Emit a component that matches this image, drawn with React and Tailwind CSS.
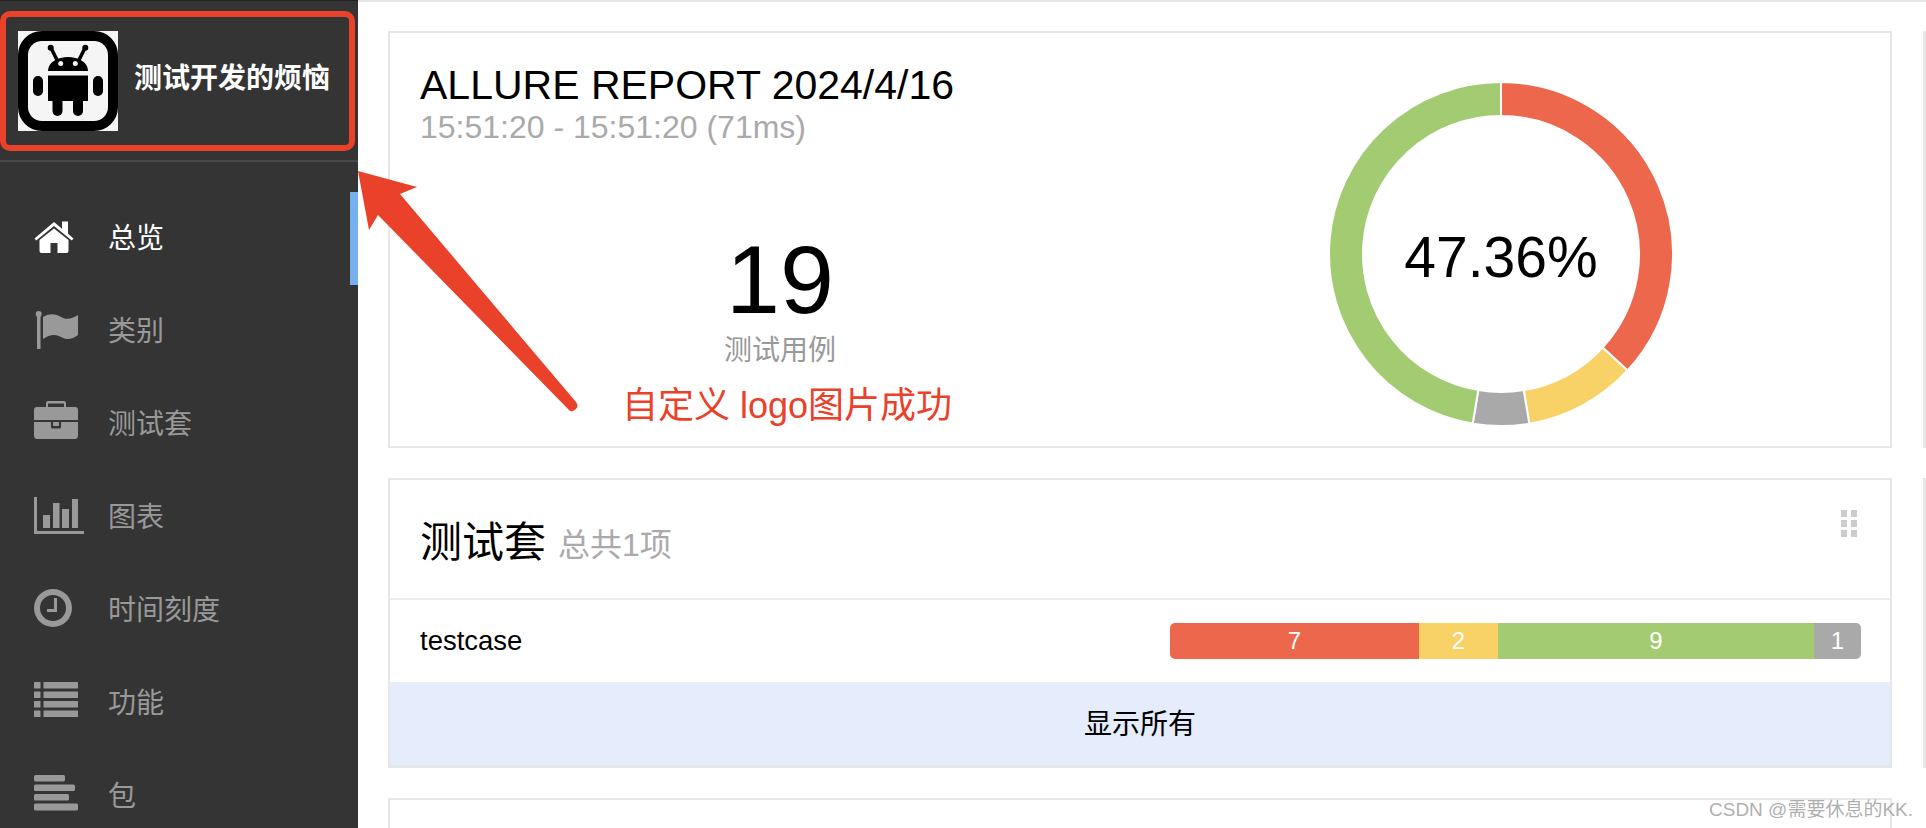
import React from 'react';

const cjk = 'font-["Liberation_Sans","Noto_Sans_CJK_SC",sans-serif]';

const HomeIcon = () => (
  <svg width="40" height="32" viewBox="0 0 40 32" className="fill-current">
    <path d="M20 1 L28 7.8 V0.5 H34 V12.7 L39.5 17.5 L37.8 19.5 L20 5 L2.2 19.5 L0.5 17.5 Z" />
    <path d="M20 7.5 L34.5 19 V30 Q34.5 32 32.5 32 H23.5 V22 H16.5 V32 H7.5 Q5.5 32 5.5 30 V19 Z" />
  </svg>
);

const FlagIcon = () => (
  <svg width="44" height="38" viewBox="0 0 44 38" className="fill-current">
    <circle cx="4.7" cy="3" r="3" />
    <rect x="3" y="3" width="3.5" height="35" />
    <path d="M9 6 C16 2 22 3 27 6 C32 9 38 8 44 4 V24 C38 29 32 29 27 26 C22 23 16 23 9 28 Z" />
  </svg>
);

const BriefcaseIcon = () => (
  <svg width="44" height="38" viewBox="0 0 44 38" className="fill-current">
    <path d="M14 0 H30 Q32 0 32 2 V6 H41 Q44 6 44 9 V19 H0 V9 Q0 6 3 6 H12 V2 Q12 0 14 0 Z M14 2.5 V6 H30 V2.5 Z" fillRule="evenodd" />
    <path d="M0 21 H17 V26 Q17 27.5 18.5 27.5 H25.5 Q27 27.5 27 26 V21 H44 V34 Q44 38 41 38 H3 Q0 38 0 34 Z" />
    <rect x="19" y="21" width="6" height="4" />
  </svg>
);

const ChartIcon = () => (
  <svg width="50" height="37" viewBox="0 0 50 37" className="fill-current">
    <path d="M0 0 H3 V34 H50 V37 H0 Z" />
    <rect x="9" y="18" width="7" height="13" />
    <rect x="19" y="6" width="6.5" height="25" />
    <rect x="28" y="12" width="7" height="19" />
    <rect x="38" y="2" width="6" height="29" />
  </svg>
);

const ClockIcon = () => (
  <svg width="38" height="38" viewBox="0 0 38 38" className="fill-current">
    <path d="M19 0 A19 19 0 1 0 19 38 A19 19 0 1 0 19 0 Z M19 6 A13 13 0 1 1 19 32 A13 13 0 1 1 19 6 Z" fillRule="evenodd" />
    <path d="M20 9 H23 V23 H13 V20 H20 Z" />
  </svg>
);

const ListIcon = () => (
  <svg width="44" height="35" viewBox="0 0 44 35" className="fill-current">
    {[0, 9.5, 19, 28.5].map((y) => (
      <React.Fragment key={y}>
        <rect x="0" y={y} width="6.5" height="6.5" rx="0.5" />
        <rect x="9.5" y={y} width="34.5" height="6.5" rx="0.5" />
      </React.Fragment>
    ))}
  </svg>
);

const AlignIcon = () => (
  <svg width="44" height="36" viewBox="0 0 44 36" className="fill-current">
    <rect x="0" y="0" width="31" height="6.5" rx="1.5" />
    <rect x="0" y="9.5" width="41" height="6.5" rx="1.5" />
    <rect x="0" y="19" width="35" height="6.5" rx="1.5" />
    <rect x="0" y="28.5" width="44" height="7" rx="1.5" />
  </svg>
);

const AndroidLogo = () => (
  <svg width="100" height="100" viewBox="0 0 100 100" className="shrink-0">
    <rect width="100" height="100" fill="#f5f5f5" />
    <rect x="0" y="0" width="100" height="100" rx="24" fill="#000" />
    <rect x="10" y="10" width="80" height="80" rx="14" fill="#f5f5f5" />
    <path d="M33 17 L39 29" stroke="#000" strokeWidth="3.5" />
    <path d="M67 17 L61 29" stroke="#000" strokeWidth="3.5" />
    <circle cx="32.7" cy="16.7" r="3" />
    <circle cx="67.3" cy="16.7" r="3" />
    <path d="M30 40 C30 31 40 26 50 26 C60 26 70 31 70 40 Z" />
    <circle cx="42.7" cy="32.5" r="2.5" fill="#f5f5f5" />
    <circle cx="57.3" cy="32.5" r="2.5" fill="#f5f5f5" />
    <rect x="30" y="44.5" width="40" height="25.5" />
    <rect x="34.5" y="60" width="10" height="25" rx="5" />
    <rect x="55" y="60" width="10" height="25" rx="5" />
    <rect x="15" y="45" width="10" height="20" rx="5" />
    <rect x="75" y="45" width="10" height="20" rx="5" />
  </svg>
);

const navItems = [
  { label: '总览', icon: HomeIcon, active: true, shift: '-translate-y-[2px]' },
  { label: '类别', icon: FlagIcon, shift: '-translate-y-[2px]' },
  { label: '测试套', icon: BriefcaseIcon, shift: '-translate-y-[5px]' },
  { label: '图表', icon: ChartIcon, shift: '-translate-y-[2px]' },
  { label: '时间刻度', icon: ClockIcon, shift: '-translate-y-[3px]' },
  { label: '功能', icon: ListIcon, shift: '-translate-y-[4px]' },
  { label: '包', icon: AlignIcon, shift: '-translate-y-[4px]' },
];

// donut segments, clockwise from the top
const polar = (r, deg) => {
  const a = ((deg - 90) * Math.PI) / 180;
  return [172 + r * Math.cos(a), 172 + r * Math.sin(a)];
};

const arcPath = (from, to) => {
  const large = to - from > 180 ? 1 : 0;
  const [x1, y1] = polar(172, from);
  const [x2, y2] = polar(172, to);
  const [x3, y3] = polar(138, to);
  const [x4, y4] = polar(138, from);
  return `M${x1} ${y1} A172 172 0 ${large} 1 ${x2} ${y2} L${x3} ${y3} A138 138 0 ${large} 0 ${x4} ${y4} Z`;
};

const segments = [
  { value: 7, color: '#ed674c' },
  { value: 2, color: '#f8d167' },
  { value: 1, color: '#a9a9a9' },
  { value: 9, color: '#a3cb72' },
];

const Donut = () => {
  let start = 0;
  return (
    <div className="relative w-[344px] h-[344px]">
      <svg width="344" height="344" viewBox="0 0 344 344">
        {segments.map((s) => {
          const from = start;
          const to = start + (s.value / 19) * 360;
          start = to;
          return <path key={s.color} d={arcPath(from, to)} fill={s.color} stroke="#fff" strokeWidth="2" />;
        })}
      </svg>
      <div className="absolute inset-0 flex items-center justify-center pt-[7px] text-[57px] text-black">47.36%</div>
    </div>
  );
};

const bar = [
  { value: 7, w: 'w-[249px]', color: 'bg-[#ed674c]' },
  { value: 2, w: 'w-[79px]', color: 'bg-[#f8d167]' },
  { value: 9, w: 'w-[316px]', color: 'bg-[#a3cb72]' },
  { value: 1, w: 'w-[47px]', color: 'bg-[#a9a9a9]' },
];

const App = () => {
  return (
    <div className={`relative flex h-[828px] w-[1926px] overflow-hidden bg-white ${cjk}`}>
      {/* Sidebar */}
      <aside className="w-[358px] shrink-0 bg-[#343434] border-t border-[#222]">
        <div className="h-[161px] border-b-2 border-[#4a4a4a] pt-[10px]">
          <div className="flex h-[140px] w-[355px] items-center rounded-[10px] border-[6px] border-[#e9412a] pl-[12px]">
            <AndroidLogo />
            <span className="ml-4 text-[28px] font-bold leading-none text-white -translate-y-[2px] whitespace-nowrap">测试开发的烦恼</span>
          </div>
        </div>
        <nav className="pt-[30px]">
          {navItems.map(({ label, icon: Icon, active, shift }) => (
            <div key={label} className={`relative flex h-[93px] items-center pl-[34px] ${active ? 'text-white' : 'text-[#999]'}`}>
              <div className={`flex w-[74px] items-center ${shift}`}>
                <Icon />
              </div>
              <span className="text-[28px] leading-none">{label}</span>
              {active && <div className="absolute right-0 top-0 h-full w-2 bg-[#76b0ee]" />}
            </div>
          ))}
        </nav>
      </aside>

      {/* Main */}
      <main className="flex flex-1 gap-[31px] border-t-2 border-[#e5e5e5] pt-[29px] pl-[30px]">
        <div className="w-[1504px] shrink-0">
          <section className="flex h-[417px] border-2 border-[#e7e7e7]">
            <div className="w-[750px] shrink-0 pl-[30px] pt-[28px]">
              <div className="text-[41px] leading-[48px] text-black">ALLURE REPORT 2024/4/16</div>
              <div className="text-[32px] leading-[36px] text-[#aaa]">15:51:20 - 15:51:20 (71ms)</div>
              <div className="mt-[85px] w-[720px] text-center">
                <div className="text-[97px] leading-[100px] text-black">19</div>
                <div className="mt-px text-[28px] leading-[40px] text-[#999]">测试用例</div>
              </div>
            </div>
            <div className="flex flex-1 justify-start pl-[189px] pt-[49px]">
              <Donut />
            </div>
          </section>

          <section className="mt-[30px] border-2 border-b-[3px] border-[#e7e7e7]">
            <div className="relative flex h-[120px] items-center gap-[12px] border-b-2 border-[#eee] pl-[30px] pt-[6px]">
              <span className="text-[42px] text-black">测试套</span>
              <span className="mt-[6px] text-[32px] text-[#aaa]">总共1项</span>
              <div className="absolute right-[33px] top-[30px] grid grid-cols-2 gap-x-[4px] gap-y-[3px]">
                {[0, 1, 2, 3, 4, 5].map((i) => (
                  <div key={i} className="h-[7px] w-[6px] bg-[#ccc]" />
                ))}
              </div>
            </div>
            <div className="flex h-[82px] items-center justify-between pl-[30px] pr-[29px]">
              <span className="text-[27.5px] text-black">testcase</span>
              <div className="flex h-9 overflow-hidden rounded-[5px] text-[24px] text-white">
                {bar.map((s) => (
                  <div key={s.value} className={`flex items-center justify-center ${s.w} ${s.color}`}>{s.value}</div>
                ))}
              </div>
            </div>
            <div className="flex h-[83px] items-center justify-center bg-[#e5ecfb] pt-[2px] text-[28px] text-black">显示所有</div>
          </section>

          <section className="mt-[30px] h-[60px] border-2 border-[#e7e7e7]" />
        </div>

        {/* next column, only its left edge is on screen */}
        <div className="flex-1">
          <section className="h-[417px] border-2 border-[#e7e7e7]" />
          <section className="mt-[30px] h-[290px] border-2 border-[#e7e7e7]" />
        </div>
      </main>

      {/* Annotation arrow and caption */}
      <svg width="1926" height="828" className="absolute left-0 top-0 pointer-events-none">
        <path d="M358 171 L417 187 L400 194 L576 402 Q579 406 576 409 L573 411 Q570 412 568 409 L378 215 L369 230 Z" fill="#e9412a" />
      </svg>
      <div className="absolute left-[622px] top-[384px] text-[36px] leading-[44px] text-[#e9412a]">自定义 logo图片成功</div>
      <div className="absolute left-[1709px] top-[798px] text-[19px] leading-[24px] text-[#999]/80">CSDN @需要休息的KK.</div>
    </div>
  );
};

export default App;
